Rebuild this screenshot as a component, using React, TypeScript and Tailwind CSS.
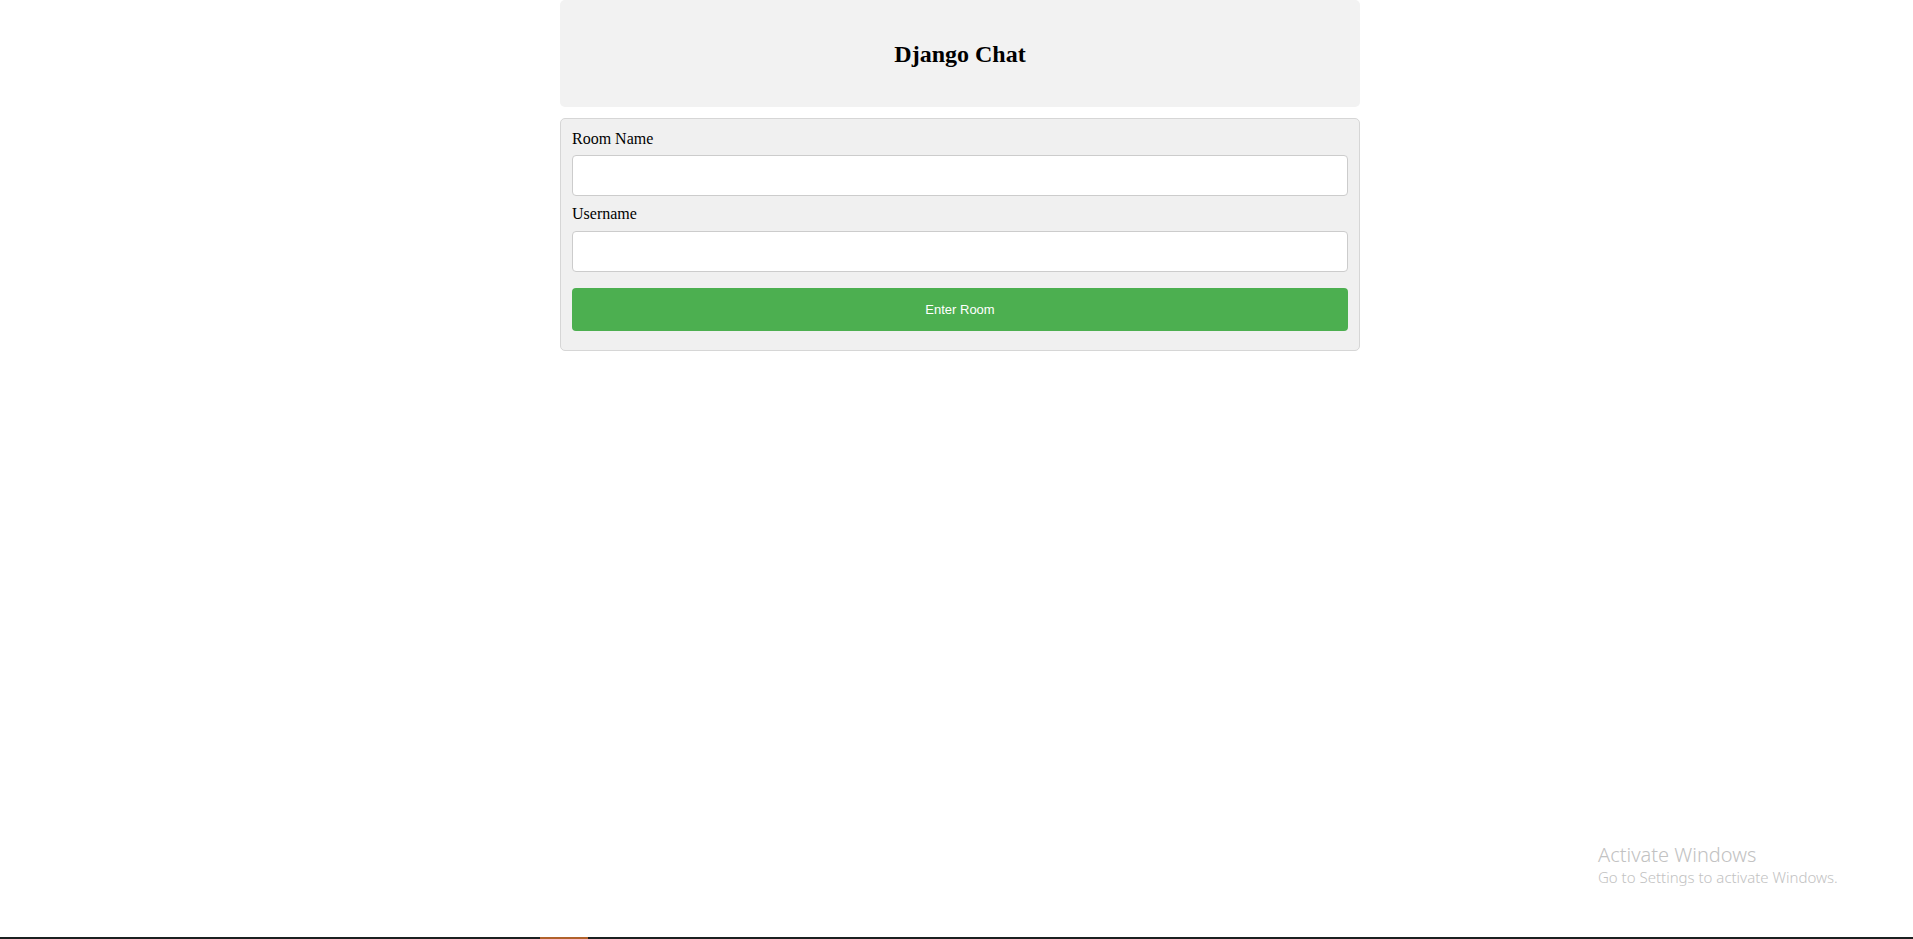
import React from "react";

export default function App() {
  return (
    <div className="relative flex h-[939px] flex-col bg-white">
      <div className="flex flex-1 flex-col items-center pl-[7px] font-['Liberation_Serif',serif] text-black">
        <div className="flex h-[107px] w-[800px] items-center justify-center rounded-[5px] bg-[#f2f2f2]">
          <h2 className="text-[24px] font-bold leading-[28px]">Django Chat</h2>
        </div>
        <div className="mt-[11px] flex w-[800px] flex-col rounded-[5px] border border-[#d6d6d6] bg-[#f0f0f0] px-[10px] pt-[11px] pb-[19px]">
          <label className="block pl-[1px] text-[16px] leading-[18px]">Room Name</label>
          <input
            type="text"
            className="mx-[1px] mt-[7px] h-[41px] rounded-[4px] border border-[#cccccc] bg-white px-[10px] outline-none"
          />
          <label className="mt-[9px] block pl-[1px] text-[16px] leading-[18px]">Username</label>
          <input
            type="text"
            className="mx-[1px] mt-[8px] h-[41px] rounded-[4px] border border-[#cccccc] bg-white px-[10px] outline-none"
          />
          <button className="mx-[1px] mt-[16px] h-[43px] rounded-[4px] bg-[#4caf50] font-['Liberation_Sans',Arial,sans-serif] text-[13px] text-white">
            Enter Room
          </button>
        </div>
      </div>
      <div className="flex h-[2px] w-full bg-[#1b2020]">
        <div className="ml-[540px] h-full w-[48px] bg-[#b0622b]" />
      </div>
      <div className="pointer-events-none absolute left-[1598px] top-[842px] font-['Noto_Sans',sans-serif] font-light text-[#c2c2c2]">
        <div className="text-[20px] leading-[25px]">Activate Windows</div>
        <div className="text-[15px] leading-[20px]">Go to Settings to activate Windows.</div>
      </div>
    </div>
  );
}
